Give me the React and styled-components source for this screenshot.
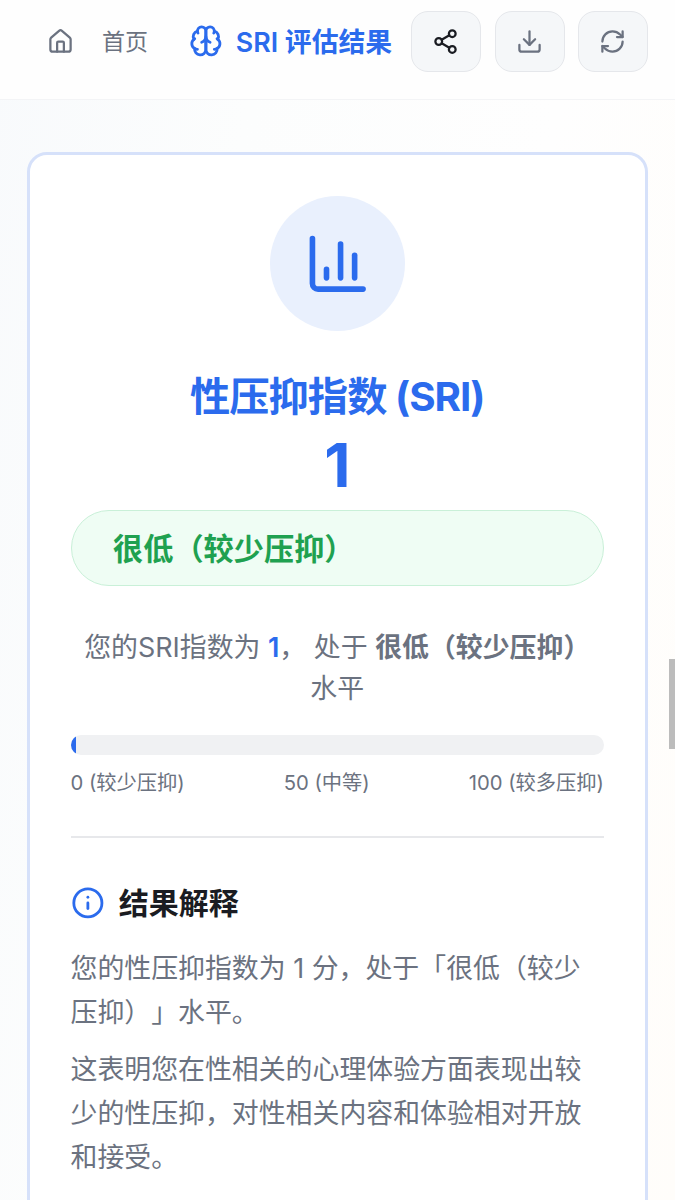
import React from "react";
import styled, { createGlobalStyle } from "styled-components";
import { House, Share2, Download, RefreshCw, ChartColumn, Info } from "lucide-react";

const GlobalStyle = createGlobalStyle`
  * { box-sizing: border-box; margin: 0; }
  html, body { height: 1200px; overflow: hidden; }
  body {
    font-family: Inter, "Noto Sans CJK SC", sans-serif;
    font-size: 26.9px;
    font-weight: 370;
    color: #6b7280;
    text-spacing-trim: space-all;
    -webkit-font-smoothing: antialiased;
  }
`;

const Page = styled.div`
  position: relative;
  height: 1200px;
  overflow: hidden;
  display: flex;
  flex-direction: column;
  background: linear-gradient(100deg, #f8fafc 0%, #fcfdfd 30%, #fefefe 65%, #fffdfa 100%);
`;

const Header = styled.header`
  height: 100px;
  flex: none;
  display: flex;
  align-items: flex-start;
  justify-content: space-between;
  padding: 11px 27px 0;
  background: #fefefe;
  border-bottom: 1.5px solid #f3f4f6;
`;

const HeaderGroup = styled.div`
  display: flex;
  align-items: center;
  height: 60px;
`;

const HomeLink = styled.a`
  display: flex;
  align-items: center;
  gap: 28px;
  margin-left: 20px;
  font-size: 23px;
  font-weight: 400;

  span { margin-top: -2px; }
`;

const PageTitle = styled.h1`
  display: flex;
  align-items: center;
  gap: 13.5px;
  margin-left: 40.5px;
  font-size: 26.8px;
  font-weight: 600;
  color: #2b6bed;
  white-space: nowrap;

  span { margin-top: -2px; }
`;

const Actions = styled(HeaderGroup)`
  gap: 13.5px;
`;

const ActionButton = styled.button`
  width: 70px;
  height: 61px;
  display: grid;
  place-items: center;
  padding: 0;
  border: 1.5px solid #e5e7eb;
  border-radius: 17px;
  background: #f5f7f9;
  color: ${(p) => (p.$strong ? "#1a1c22" : "#6b7280")};

  svg { margin-left: -1px; }
`;

const Card = styled.main`
  margin: 52px 27px 0;
  height: 1200px;
  flex: none;
  padding: 41px 41px 40px 40.5px;
  border: 3px solid #d6e1fa;
  border-radius: 20px;
  background: #fff;
`;

const Summary = styled.section`
  display: flex;
  flex-direction: column;
  align-items: center;
`;

const IconDisc = styled.div`
  width: 135px;
  height: 135px;
  display: grid;
  place-items: center;
  border-radius: 50%;
  background: #e9f0fd;
  color: #2b6bed;
`;

const IndexName = styled.h2`
  margin-top: 39px;
  font-size: 40.3px;
  line-height: 54px;
  font-weight: 700;
  letter-spacing: -0.025em;
  color: #2b6bed;
  white-space: nowrap;
`;

const Score = styled.div`
  margin-top: 8px;
  font-size: 60.75px;
  line-height: 67px;
  font-weight: 700;
  color: #2b6bed;
`;

const LevelBadge = styled.div`
  align-self: stretch;
  height: 76px;
  display: flex;
  align-items: center;
  margin-top: 11px;
  padding: 0 41.5px 2px;
  border: 1.5px solid #c9f0d8;
  border-radius: 38px;
  background: #effdf4;
  color: #1fa150;
  font-size: 30.2px;
  font-weight: 600;
`;

const Statement = styled.p`
  margin-top: 41px;
  line-height: 40.5px;
  text-align: center;
`;

const Strong = styled.strong`
  font-weight: 600;
  color: ${(p) => (p.$accent ? "#2b6bed" : "inherit")};
`;

const Track = styled.div`
  height: 20px;
  margin-top: 27px;
  border-radius: 10px;
  background: #f0f1f3;
  overflow: hidden;
`;

const Fill = styled.div`
  width: 1%;
  height: 100%;
  background: #2b6bed;
`;

const Scale = styled.div`
  display: flex;
  justify-content: space-between;
  margin-top: 14px;
  font-size: 20.25px;
  line-height: 27px;
  font-weight: 400;
`;

const Divider = styled.hr`
  margin: 40px 0 0;
  border: 0;
  height: 2px;
  background: #e7e8eb;
`;

const SectionTitle = styled.h3`
  display: flex;
  align-items: center;
  gap: 14.5px;
  margin-top: 44px;
  font-size: 30px;
  line-height: 42px;
  font-weight: 600;
  color: #1a1c22;

  svg { color: #2b6bed; }
`;

const Explanation = styled.div`
  display: flex;
  flex-direction: column;
  gap: 13.5px;
  margin-top: 23px;
  line-height: 43.875px;
`;

const ScrollThumb = styled.div`
  position: absolute;
  top: 659px;
  right: 0;
  width: 6px;
  height: 90px;
  background: #bcbcbc;
`;

function BrainIcon({ size }) {
  return (
    <svg width={size} height={size} viewBox="0 0 24 24" fill="none" stroke="currentColor" strokeWidth="2" strokeLinecap="round" strokeLinejoin="round">
      <path d="M12 5a3 3 0 1 0-5.997.125 4 4 0 0 0-2.526 5.77 4 4 0 0 0 .556 6.588A4 4 0 1 0 12 18Z" />
      <path d="M12 5a3 3 0 1 1 5.997.125 4 4 0 0 1 2.526 5.77 4 4 0 0 1-.556 6.588A4 4 0 1 1 12 18Z" />
      <path d="M15 13a4.5 4.5 0 0 1-3-4 4.5 4.5 0 0 1-3 4" />
      <path d="M17.599 6.5a3 3 0 0 0 .399-1.375" />
      <path d="M6.003 5.125A3 3 0 0 0 6.401 6.5" />
      <path d="M3.477 10.896a4 4 0 0 1 .585-.396" />
      <path d="M19.938 10.5a4 4 0 0 1 .585.396" />
      <path d="M6 18a4 4 0 0 1-1.967-.516" />
      <path d="M19.967 17.484A4 4 0 0 1 18 18" />
    </svg>
  );
}

export default function App() {
  return (
    <Page>
      <GlobalStyle />
      <Header>
        <HeaderGroup>
          <HomeLink>
            <House size={27} />
            <span>首页</span>
          </HomeLink>
          <PageTitle>
            <BrainIcon size={33.75} />
            <span>SRI 评估结果</span>
          </PageTitle>
        </HeaderGroup>
        <Actions>
          <ActionButton $strong aria-label="分享"><Share2 size={27} /></ActionButton>
          <ActionButton aria-label="下载"><Download size={27} /></ActionButton>
          <ActionButton aria-label="刷新"><RefreshCw size={27} /></ActionButton>
        </Actions>
      </Header>
      <Card>
        <Summary>
          <IconDisc><ChartColumn size={67.5} /></IconDisc>
          <IndexName>性压抑指数 (SRI)</IndexName>
          <Score>1</Score>
          <LevelBadge>很低（较少压抑）</LevelBadge>
        </Summary>
        <Statement>
          您的SRI指数为 <Strong $accent>1</Strong>， 处于 <Strong>很低（较少压抑）</Strong> 水平
        </Statement>
        <Track><Fill /></Track>
        <Scale>
          <span>0 (较少压抑)</span>
          <span>50 (中等)</span>
          <span>100 (较多压抑)</span>
        </Scale>
        <Divider />
        <SectionTitle><Info size={33.75} />结果解释</SectionTitle>
        <Explanation>
          <p>您的性压抑指数为 1 分，处于「很低（较少压抑）」水平。</p>
          <p>这表明您在性相关的心理体验方面表现出较少的性压抑，对性相关内容和体验相对开放和接受。</p>
        </Explanation>
      </Card>
      <ScrollThumb />
    </Page>
  );
}
